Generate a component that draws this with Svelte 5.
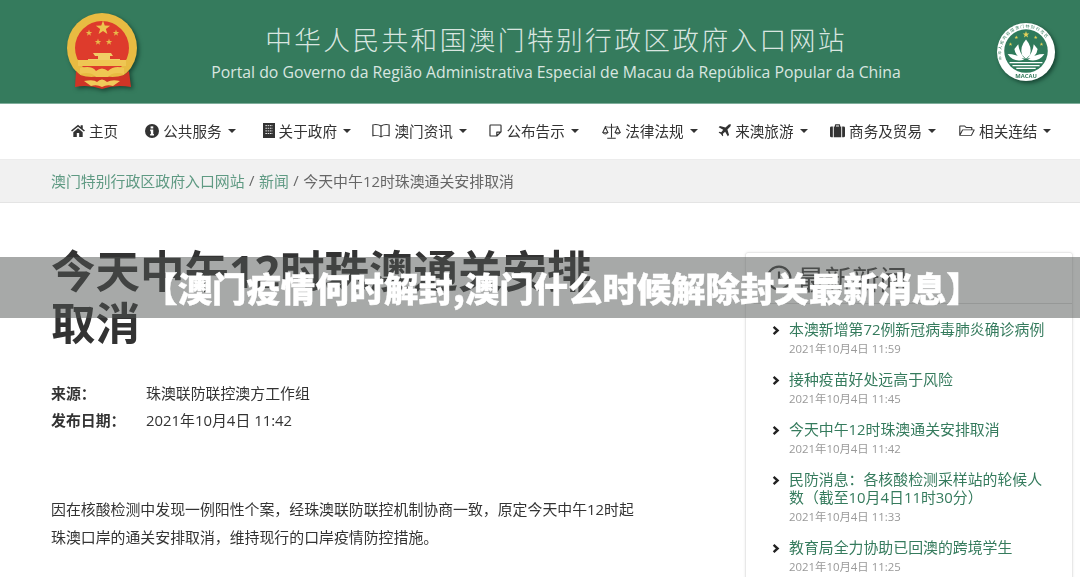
<script>
    const nav = [
        { icon: 'home', label: '主页', w: 14, h: 13, after: 27 },
        { icon: 'info', label: '公共服务', caret: true, w: 14, h: 14, after: 27 },
        { icon: 'building', label: '关于政府', caret: true, w: 12, h: 15, after: 21.5 },
        { icon: 'book', label: '澳门资讯', caret: true, w: 18, h: 15, after: 22.5 },
        { icon: 'note', label: '公布告示', caret: true, w: 13, h: 13, after: 23.5 },
        { icon: 'scale', label: '法律法规', caret: true, w: 19, h: 16, after: 20.5 },
        { icon: 'plane', label: '来澳旅游', caret: true, w: 13, h: 13, after: 22.5 },
        { icon: 'case', label: '商务及贸易', caret: true, w: 15, h: 14, after: 23 },
        { icon: 'folder', label: '相关连结', caret: true, w: 16, h: 13, after: 0 }
    ];

    const news = [
        { title: '本澳新增第72例新冠病毒肺炎确诊病例', date: '2021年10月4日 11:59' },
        { title: '接种疫苗好处远高于风险', date: '2021年10月4日 11:45' },
        { title: '今天中午12时珠澳通关安排取消', date: '2021年10月4日 11:42' },
        { title: '民防消息：各核酸检测采样站的轮候人数（截至10月4日11时30分）', date: '2021年10月4日 11:33' },
        { title: '教育局全力协助已回澳的跨境学生', date: '2021年10月4日 11:25' }
    ];

    // five pointed star, used for both emblems
    function star(cx, cy, r) {
        let pts = [];
        for (let i = 0; i < 10; i++) {
            const rad = i % 2 ? r * 0.4 : r;
            const a = -Math.PI / 2 + (i * Math.PI) / 5;
            pts.push((cx + rad * Math.cos(a)).toFixed(2) + ',' + (cy + rad * Math.sin(a)).toFixed(2));
        }
        return pts.join(' ');
    }
</script>

<div class="page">
    <header class="banner">
        <svg class="emblem" viewBox="0 0 76 80" width="76" height="80">
            <circle cx="36" cy="37" r="35" fill="#e8bb42" />
            <circle cx="36" cy="37" r="27" fill="#de3b2c" />
            <polygon points={star(37, 17, 7.5)} fill="#edc44e" />
            <polygon points={star(23, 22, 3.4)} fill="#e8b94a" />
            <polygon points={star(50, 22, 3.4)} fill="#e8b94a" />
            <polygon points={star(32, 31, 3.4)} fill="#e8b94a" />
            <polygon points={star(43, 31, 3.4)} fill="#e8b94a" />
            <path d="M27 42 h18 l2 3 h-3 v3 h10 v1 h-32 v-1 h10 v-3 h-3 Z" fill="#f0cd66" />
            <path d="M12 49 h48 v6 h-48 Z" fill="#efc653" />
            <path d="M10 60 L14 64 Q26 68 36 64 Q46 68 58 64 L63 60 L65 76 Q50 73 36 78 Q22 73 9 76 Z" fill="#cf3426" />
            <path d="M14 57 Q26 54 30 60 Q36 55 42 60 Q48 54 58 57 L58 63 Q47 60 42 66 H30 Q25 60 14 63 Z" fill="#efc653" />
            <path d="M18 70 Q28 68 31 71 Q36 66 41 71 Q46 68 54 70 L47 75 Q41 73 36 76 Q31 73 25 75 Z" fill="#f0c95a" />
        </svg>
        <div class="names">
            <div class="name-zh">中华人民共和国澳门特别行政区政府入口网站</div>
            <div class="name-pt">Portal do Governo da Região Administrativa Especial de Macau da República Popular da China</div>
        </div>
        <svg class="seal" viewBox="0 0 62 62" width="60" height="60">
            <defs>
                <path id="ring" d="M6.5 39 A25.6 25.6 0 1 1 55.5 39" />
            </defs>
            <circle cx="31" cy="31" r="30" fill="#fff" />
            <circle cx="31" cy="30" r="22.5" fill="#2f7a5b" />
            <text class="ring-text"><textPath href="#ring" textLength="72">中华人民共和国澳门特别行政区</textPath></text>
            <polygon points={star(31, 13, 3.6)} fill="#e6d25a" />
            <polygon points={star(21, 16, 2)} fill="#e6d25a" />
            <polygon points={star(41, 16, 2)} fill="#e6d25a" />
            <polygon points={star(15, 23, 2)} fill="#e6d25a" />
            <polygon points={star(47, 23, 2)} fill="#e6d25a" />
            <path d="M31 18 Q38 26 35 34 L31 38 L27 34 Q24 26 31 18 Z M23 23 Q24 32 30 38 Q20 37 19 28 Z M39 23 Q38 32 32 38 Q42 37 43 28 Z M12 33 Q22 33 29 39 Q18 42 12 33 Z M50 33 Q40 33 33 39 Q44 42 50 33 Z" fill="#fff" />
            <path d="M14 42 h34 M17 45 h28 M21 48 h20" stroke="#fff" stroke-width="1.3" />
            <text x="31" y="58" class="seal-text" text-anchor="middle">MACAU</text>
        </svg>
    </header>

    <nav class="menu">
        {#each nav as item}
            <span class="menu-item" style="margin-right: {item.after}px">
                <svg class="menu-icon" viewBox="0 0 20 20" width={item.w} height={item.h} preserveAspectRatio="none">
                    {#if item.icon === 'home'}
                        <path d="M10 1 L0 10 l1.5 1.7 L10 4.2 l8.5 7.5 L20 10 L16.8 7.2 V2 h-3 v2.5 Z M3.3 12.5 V20 h5 v-6 h3.4 v6 h5 v-7.5 L10 6.6 Z" fill="#333" />
                    {:else if item.icon === 'info'}
                        <circle cx="10" cy="10" r="10" fill="#333" />
                        <rect x="8" y="3.4" width="3.8" height="3" fill="#fff" />
                        <path d="M7.4 8 h4.4 v6.4 h1 v2.2 h-5.4 v-2.2 h1 v-4.2 h-1 Z" fill="#fff" />
                    {:else if item.icon === 'building'}
                        <rect x="0" y="0" width="20" height="20" fill="#333" />
                        <path d="M4 3.5 h12 M4 7 h12 M4 10.5 h12 M4 14 h12" stroke="#fff" stroke-width="1.3" stroke-dasharray="2.6 1.2" />
                    {:else if item.icon === 'book'}
                        <path d="M10 4 Q6 1 1 2.5 V17 Q6 15.5 10 18.5 Q14 15.5 19 17 V2.5 Q14 1 10 4 Z M10 4 V18.5" fill="none" stroke="#333" stroke-width="1.3" />
                    {:else if item.icon === 'note'}
                        <path d="M1.5 2.5 Q1.5 1.5 2.5 1.5 H17.5 Q18.5 1.5 18.5 2.5 V12 L12 18.5 H2.5 Q1.5 18.5 1.5 17.5 Z M12 18.5 V12.5 H18.5" fill="none" stroke="#333" stroke-width="1.8" stroke-linejoin="round" />
                    {:else if item.icon === 'scale'}
                        <path d="M10 1 V18 M5.5 19 H14.5 M3 4.5 Q10 6 17 4.5 M3.5 5 L0.8 12 H6.2 Z M16.5 5 L13.8 12 H19.2 Z M.8 12 Q3.5 15.5 6.2 12 M13.8 12 Q16.5 15.5 19.2 12" fill="none" stroke="#333" stroke-width="1.1" />
                    {:else if item.icon === 'plane'}
                        <path d="M19.5 .5 Q17.5 -.5 14.5 2.5 L11.5 5.5 L3 3 L1 5 L8 9 L5 12.5 L2 12 L1 13 L4.5 15.5 L7 19 L8 18 L7.5 15 L11 12 L15 19 L17 17 L14.5 8.5 L17.5 5.5 Q20.5 2.5 19.5 .5 Z" fill="#333" />
                    {:else if item.icon === 'case'}
                        <path d="M6.5 3.5 V1.5 Q6.5 .5 7.5 .5 H12.5 Q13.5 .5 13.5 1.5 V3.5 H15 V19 H5 V3.5 Z M8 3.5 H12 V2 H8 Z M0 5.5 Q0 3.5 2 3.5 H3.8 V19 H2 Q0 19 0 17 Z M16.2 3.5 H18 Q20 3.5 20 5.5 V17 Q20 19 18 19 H16.2 Z" fill="#333" />
                    {:else}
                        <path d="M1 17.5 V3 H7 L9 5.5 H16 V9 M1 17.5 L4.5 9 H19 L15.5 17.5 Z" fill="none" stroke="#333" stroke-width="1.4" stroke-linejoin="round" />
                    {/if}
                </svg>
                <span>{item.label}</span>
                {#if item.caret}<i class="caret"></i>{/if}
            </span>
        {/each}
    </nav>

    <div class="crumbs">
        <a href="#top">澳门特别行政区政府入口网站</a>
        <span>/</span>
        <a href="#top">新闻</a>
        <span>/</span>
        <span>今天中午12时珠澳通关安排取消</span>
    </div>

    <main class="content">
        <article class="story">
            <h1>今天中午12时珠澳通关安排取消</h1>
            <dl>
                <dt>来源：</dt>
                <dd>珠澳联防联控澳方工作组</dd>
                <dt>发布日期：</dt>
                <dd>2021年10月4日 11:42</dd>
            </dl>
            <p>因在核酸检测中发现一例阳性个案，经珠澳联防联控机制协商一致，原定今天中午12时起珠澳口岸的通关安排取消，维持现行的口岸疫情防控措施。</p>
        </article>

        <aside class="latest">
            <h2>
                <svg viewBox="0 0 24 24" width="26" height="26">
                    <circle cx="12" cy="12" r="10.5" fill="none" stroke="#444" stroke-width="2" />
                    <path d="M12 6 V12.5 L16 15" fill="none" stroke="#444" stroke-width="2" />
                </svg>
                最新新闻
            </h2>
            <ul>
                {#each news as row}
                    <li>
                        <svg class="chevron" viewBox="0 0 10 12" width="8" height="11">
                            <path d="M2 1.5 L7 6 L2 10.5" fill="none" stroke="#222" stroke-width="3" />
                        </svg>
                        <div>
                            <a href="#top">{row.title}</a>
                            <small>{row.date}</small>
                        </div>
                    </li>
                {/each}
            </ul>
        </aside>
    </main>

    <div class="overlay">【澳门疫情何时解封,澳门什么时候解除封关最新消息】</div>
</div>

<style>
    :global(body) {
        margin: 0;
        background: #fff;
    }

    .page {
        position: relative;
        width: 1080px;
        height: 577px;
        overflow: hidden;
        font-family: "Open Sans", "Noto Sans CJK SC", sans-serif;
        color: #333;
        filter: blur(0.35px);
    }

    .banner {
        box-sizing: border-box;
        border-bottom: 1px solid #7fae9b;
        height: 104px;
        background: #357b5d;
        display: flex;
        align-items: center;
        padding: 0 24px 0 66px;
    }

    .emblem {
        flex: none;
        margin-top: -1px;
        filter: drop-shadow(2px 2px 2px rgba(0, 30, 20, 0.55));
    }

    .names {
        flex: 1;
        text-align: center;
        color: #d9e6e0;
        margin-right: 26px;
    }

    .name-zh {
        font-size: 26.7px;
        letter-spacing: 2.4px;
        line-height: 36px;
        font-weight: 300;
        margin-top: 2px;
    }

    .name-pt {
        font-size: 15.8px;
        line-height: 22px;
        margin-top: 3px;
        white-space: nowrap;
    }

    .seal {
        flex: none;
        filter: drop-shadow(2px 2px 2px rgba(0, 30, 20, 0.6));
    }

    .seal-text {
        font-size: 6px;
        font-weight: 700;
        fill: #357b5d;
        font-family: "Open Sans", sans-serif;
    }

    .ring-text {
        font-size: 4px;
        fill: #357b5d;
        font-family: "Noto Sans CJK SC", sans-serif;
    }

    .menu {
        height: 55px;
        box-sizing: border-box;
        padding: 0 0 2px 71px;
        display: flex;
        align-items: center;
        font-size: 14.6px;
        white-space: nowrap;
    }

    .menu-item {
        display: flex;
        align-items: center;
        gap: 4px;
    }

    .caret {
        width: 0;
        height: 0;
        margin-left: 2px;
        border-top: 4px solid #333;
        border-left: 4px solid transparent;
        border-right: 4px solid transparent;
    }

    .crumbs {
        height: 44px;
        box-sizing: border-box;
        background: #f1f1f1;
        border-top: 1px solid #ececec;
        border-bottom: 1px solid #e4e4e4;
        display: flex;
        align-items: center;
        gap: 4.5px;
        padding: 0 0 2px 51px;
        font-size: 14.9px;
        color: #666;
    }

    .crumbs a {
        color: #5f9a83;
        text-decoration: none;
    }

    .content {
        display: flex;
        justify-content: space-between;
        padding: 42px 7px 0 51px;
    }

    .story {
        width: 585px;
    }

    h1 {
        margin: 0;
        width: 560px;
        font-size: 44.5px;
        line-height: 52px;
        font-weight: 700;
        color: #333;
    }

    dl {
        display: grid;
        grid-template-columns: 95px 1fr;
        row-gap: 7px;
        margin: 34px 0 0;
        font-size: 14.9px;
        line-height: 20px;
    }

    dt {
        font-weight: 700;
    }

    dd {
        margin: 0;
    }

    p {
        margin: 65px 0 0;
        font-size: 14.9px;
        line-height: 28px;
    }

    .latest {
        width: 328px;
        height: 340px;
        margin-top: 7px;
        box-sizing: border-box;
        border: 1px solid #e8e8e8;
        border-radius: 3px;
        box-shadow: 0 0 3px rgba(0, 0, 0, 0.08);
    }

    h2 {
        display: flex;
        align-items: center;
        gap: 5px;
        margin: 0;
        height: 50px;
        padding-left: 20px;
        font-size: 27.5px;
        font-weight: 400;
        color: #444;
        border-bottom: 1px solid #ddd;
    }

    ul {
        list-style: none;
        margin: 0;
        padding: 16px 20px 0 26px;
    }

    li {
        display: flex;
        gap: 9px;
        margin-bottom: 11px;
    }

    .chevron {
        flex: none;
        margin-top: 5px;
    }

    li a {
        display: block;
        font-size: 14.9px;
        line-height: 18px;
        color: #357b5d;
        text-decoration: none;
    }

    small {
        display: block;
        font-size: 11.4px;
        line-height: 21px;
        color: #999;
    }

    .overlay {
        position: absolute;
        left: 0;
        right: 0;
        top: 257px;
        height: 61px;
        padding-left: 44px;
        background: rgba(80, 84, 82, 0.5);
        color: #fff;
        font-family: "Noto Sans CJK SC", sans-serif;
        font-size: 34.4px;
        font-weight: 900;
        line-height: 60px;
        text-align: center;
        -webkit-text-stroke: 0.4px #fff;
    }
</style>
